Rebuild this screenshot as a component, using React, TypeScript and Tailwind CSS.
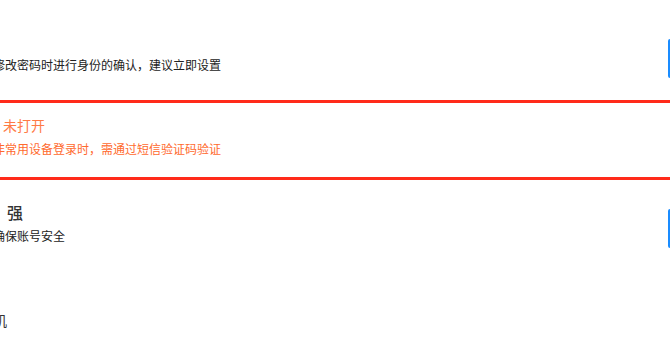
import React from "react";

const font = { fontFamily: '"Noto Sans CJK SC", "Liberation Sans", sans-serif' };

function SideButton() {
  return <div className="h-[39px] w-[80px] shrink-0 rounded-[2px] border-2 border-[#1a8cff]" />;
}

export default function App() {
  return (
    <div className="h-[356px] w-[670px] overflow-hidden bg-white" style={font}>
      <div className="-ml-[7px] w-[760px]">
        {/* 密保 row */}
        <div className="flex h-[100px] justify-between">
          <div className="pt-[56px]">
            <p className="text-[12px] leading-[18px] text-[#222]">修改密码时进行身份的确认，建议立即设置</p>
          </div>
          <div className="mr-[5px] pt-[39px]">
            <SideButton />
          </div>
        </div>

        {/* 登录保护 row, highlighted */}
        <div className="h-[80px] border-y-[3px] border-[#ff2a1a] pt-[12px]">
          <p className="ml-[10px] text-[14px] leading-[20px] text-[#ff7a45]">未打开</p>
          <p className="mt-[5px] text-[12px] leading-[18px] text-[#ff6a2e]">非常用设备登录时，需通过短信验证码验证</p>
        </div>

        {/* 密码强度 row */}
        <div className="flex h-[90px] justify-between">
          <div className="pt-[21px]">
            <p className="ml-[14px] text-[16px] font-medium leading-[22px] text-[#333]">强</p>
            <p className="mt-[4px] text-[12px] leading-[18px] text-[#222]">确保账号安全</p>
          </div>
          <div className="mr-[5px] pt-[29px]">
            <SideButton />
          </div>
        </div>

        {/* 手机 row */}
        <div className="h-[86px] pt-[40px]">
          <p className="-ml-[14px] text-[14px] leading-[20px] text-[#333]">手机</p>
        </div>
      </div>
    </div>
  );
}
